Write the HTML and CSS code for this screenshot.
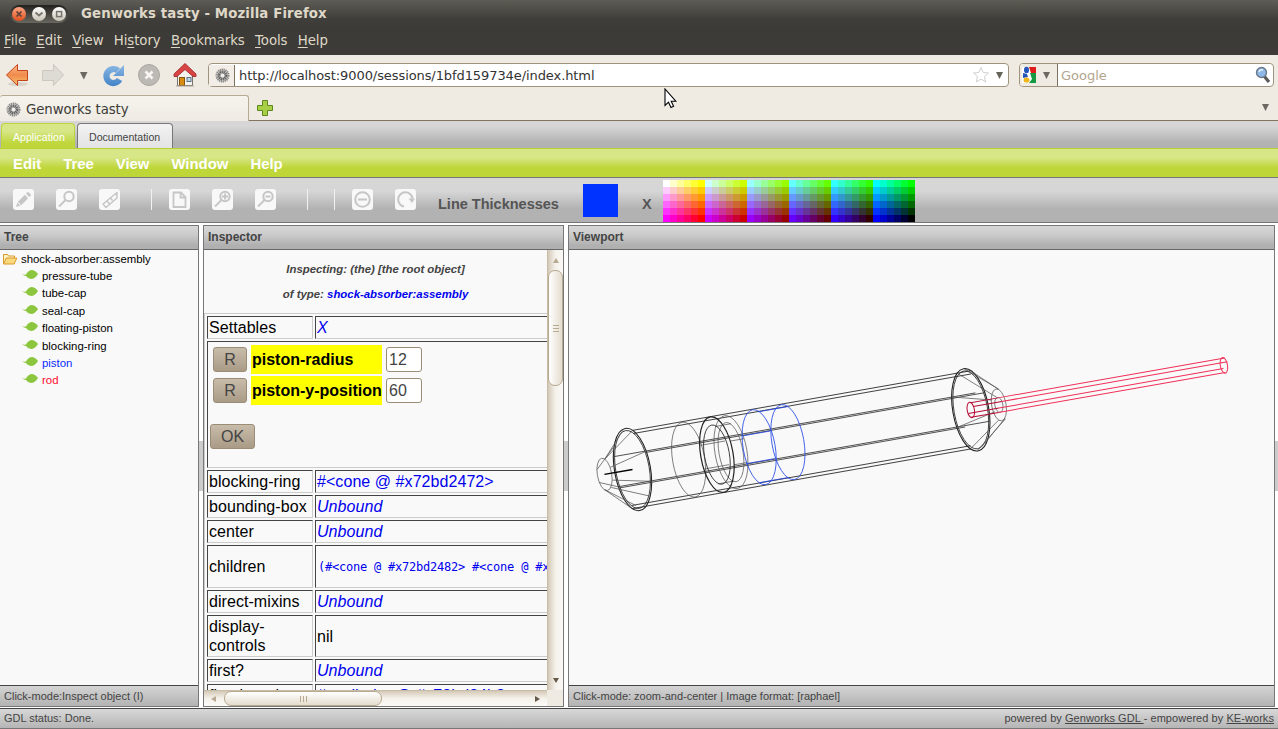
FILE: index.html
```
<!DOCTYPE html>
<html lang="en">
<head>
<meta charset="utf-8">
<title>Genworks tasty</title>
<link rel="stylesheet" href="styles.css">
</head>
<body>
<header class="chrome">
  <div class="titlebar">
    <div class="winbtns">
      <svg width="58" height="18" viewBox="0 0 58 18">
        <defs><linearGradient id="wg" x2="0" y2="1"><stop offset="0" stop-color="#fff"/><stop offset="1" stop-color="#c9c3b6"/></linearGradient>
        <linearGradient id="wo" x2="0" y2="1"><stop offset="0" stop-color="#f9a582"/><stop offset="1" stop-color="#e0501c"/></linearGradient></defs>
        <circle cx="9" cy="9" r="7" fill="url(#wo)"/><circle cx="29" cy="9" r="7" fill="url(#wg)"/><circle cx="49" cy="9" r="7" fill="url(#wg)"/>
        <path d="M6.500 6.500l5 5m0-5l-5 5" stroke="#5d4038" stroke-width="1.700"/>
        <path d="M25.500 7.500l3.500 3 3.500-3" fill="none" stroke="#77746b" stroke-width="1.800"/>
        <rect x="46.600" y="6.600" width="5" height="5" fill="none" stroke="#77746b" stroke-width="1.500"/>
      </svg>
    </div>
    <span class="wintitle">Genworks tasty - Mozilla Firefox</span>
  </div>
  <nav class="winmenu"><span><u>F</u>ile</span><span><u>E</u>dit</span><span><u>V</u>iew</span><span>Hi<u>s</u>tory</span><span><u>B</u>ookmarks</span><span><u>T</u>ools</span><span><u>H</u>elp</span></nav>
  <div class="navbar">
    <svg class="navicons" width="208" height="40" viewBox="0 55 208 40">
      <defs>
        <linearGradient id="or" x2="0" y2="1"><stop offset="0" stop-color="#fbb98a"/><stop offset=".5" stop-color="#f08a4b"/><stop offset="1" stop-color="#fac46f"/></linearGradient>
        <linearGradient id="bl" gradientUnits="userSpaceOnUse" x1="0" y1="66" x2="0" y2="86"><stop offset="0" stop-color="#85b4e2"/><stop offset="1" stop-color="#4584c8"/></linearGradient>
      </defs>
      <ellipse cx="18" cy="84" rx="10" ry="2" fill="#d9d3c9"/>
      <path d="M6.500 75L17.500 64.500V70.500H27.500V80.500H17.500V85.500Z" fill="url(#or)" stroke="#c4431c"/>
      <path d="M63.500 75L53.500 64.500V70.500H42.500V80.500H53.500V85.500Z" fill="#dedad4" stroke="#ccc7bf"/>
      <path d="M80 72h7.500l-3.700 7.500z" fill="#6b6861"/>
      <path d="M119.500 79.500A7 7 0 1 1 118 70.700" fill="none" stroke="url(#bl)" stroke-width="6.200"/>
      <path d="M124 65V76H113L116.500 72.500Z" fill="url(#bl)"/>
      <circle cx="149" cy="75" r="10.500" fill="#bdb9b4" stroke="#aaa69f"/>
      <path d="M145.500 71.500l7 7m0-7l-7 7" stroke="#f8f6f2" stroke-width="2.600"/>
      <path d="M177.500 75L185 68l7.500 7v10.500h-15z" fill="#f4f2ee" stroke="#77736b"/>
      <rect x="179.500" y="77.500" width="5" height="8" fill="#d88c12" stroke="#855410"/>
      <rect x="187" y="77.500" width="4" height="4" fill="#bcd7ec" stroke="#5c7284"/>
      <path d="M185 63.500l11 10.500v2.500h-3L185 69.500l-8 7h-3V74z" fill="#d94444" stroke="#9b2020" stroke-width=".8"/>
      <path d="M176 86h18" stroke="#a9a39a"/>
    </svg>
    <div class="urlbox">
      <span class="favbox"><svg class="favicon" width="15" height="15" viewBox="0 0 16 16"><circle cx="8" cy="8" r="6.300" fill="none" stroke="#8a8a8a" stroke-width="2.400" stroke-dasharray="1.400 .6"/><circle cx="8" cy="8" r="3.700" fill="none" stroke="#666" stroke-width="3" stroke-dasharray="1.600 .4"/><circle cx="8" cy="8" r="1.300" fill="#eee"/></svg></span>
      <span class="url">http://localhost:9000/sessions/1bfd159734e/index.html</span>
      <svg width="36" height="22" viewBox="0 0 36 22"><path d="M9 3.500l2.200 5 5.300.5-4 3.600 1.200 5.400L9 15.200 4.300 18l1.200-5.400-4-3.600 5.300-.5z" fill="#fff" stroke="#cfcfcf"/><path d="M24 8h7l-3.500 7z" fill="#66635a"/></svg>
    </div>
    <div class="searchbox">
      <span class="engine"><svg width="36" height="22" viewBox="0 0 36 22"><rect x="2" y="3" width="14" height="16" fill="#fff"/><path d="M9 3h7v6h-5z" fill="#e11b1b"/><path d="M10 9h6v10H9l3-4z" fill="#159a43"/><ellipse cx="6.500" cy="6" rx="2.500" ry="3.200" fill="#2456b8"/><path d="M3 9l4 1 1 3-5 1z" fill="#2456b8"/><ellipse cx="6.500" cy="16" rx="3" ry="2.600" fill="#f1b51c"/><path d="M23 8h7l-3.500 7z" fill="#6b6861"/></svg></span>
      <span class="placeholder">Google</span>
      <svg width="18" height="22" viewBox="0 0 18 22"><path d="M9 12l5 6" stroke="#5a5a5a" stroke-width="3.200"/><circle cx="6.500" cy="8.500" r="5" fill="#8db8e8" stroke="#6c7a8c" stroke-width="1.400"/><path d="M4 8q1-3 4-2" stroke="#e6f0fa" stroke-width="1.500" fill="none"/></svg>
    </div>
  </div>
  <div class="tabstrip">
    <div class="tab"><svg class="favicon" width="15" height="15" viewBox="0 0 16 16"><circle cx="8" cy="8" r="6.300" fill="none" stroke="#8a8a8a" stroke-width="2.400" stroke-dasharray="1.400 .6"/><circle cx="8" cy="8" r="3.700" fill="none" stroke="#666" stroke-width="3" stroke-dasharray="1.600 .4"/><circle cx="8" cy="8" r="1.300" fill="#eee"/></svg><span>Genworks tasty</span></div>
    <div class="tabrest">
      <svg width="18" height="18" viewBox="0 0 18 18"><path d="M6.500 1.500h5v5h5v5h-5v5h-5v-5h-5v-5h5z" fill="#a9cf46" stroke="#5d8a1e"/></svg>
      <svg width="9" height="9" viewBox="0 0 9 9"><path d="M1 1h7L4.500 8z" fill="#6b6861"/></svg>
    </div>
  </div>
</header>
<svg class="pointer" width="14" height="22" viewBox="0 0 14 22"><path d="M1 1v16.500l3.500-3.300 2.500 5.300 2.600-1.200-2.400-5.100h4.600z" fill="#fff" stroke="#000" stroke-width="1.100"/></svg>

<div class="apptabs"><span class="apptab active">Application</span><span class="apptab">Documentation</span></div>
<nav class="appmenu"><span>Edit</span><span>Tree</span><span>View</span><span>Window</span><span>Help</span></nav>
<div class="apptools">
  <svg class="toolset" width="420" height="44" viewBox="0 178 420 44">
    <g fill="#f8f8f8"><rect x="13" y="189" width="21" height="21" rx="3"/><rect x="56" y="189" width="21" height="21" rx="3"/><rect x="99" y="189" width="21" height="21" rx="3"/><rect x="169" y="189" width="21" height="21" rx="3"/><rect x="212" y="189" width="21" height="21" rx="3"/><rect x="255" y="189" width="21" height="21" rx="3"/><rect x="352" y="189" width="21" height="21" rx="3"/><rect x="395" y="189" width="21" height="21" rx="3"/></g>
    <g stroke="#f2f2f2"><path d="M151.500 189v21M307.500 189v21M334.500 189v21"/></g>
    <path d="M16 207l1.300-4.500 3.200 3.200z" fill="#c6c6c6"/><path d="M19.500 203.500l7-7" stroke="#c6c6c6" stroke-width="4.600"/><path d="M27.600 195.400l2-2" stroke="#c6c6c6" stroke-width="4.600"/>
    <g fill="none" stroke="#c6c6c6" stroke-width="2">
      <circle cx="69" cy="196.500" r="4.700"/><path d="M65.500 200l-6.500 6.500"/>
      <path d="M117 192.500v5.500l-11 9.500-3-3.500zM107 201l2.500 3M110.500 198l2 2.500" stroke-width="1.500" stroke-linejoin="round"/>
      <path d="M173.500 192.500h7.500l4.500 4.500v10h-12zM180.500 192.500v5h5" stroke-width="1.800"/>
      <circle cx="225" cy="196.500" r="4.700"/><path d="M221.500 200l-6.500 6.500M222 196.500h6M225 193.500v6" stroke-width="1.900"/>
      <circle cx="268" cy="196.500" r="4.700"/><path d="M264.500 200l-6.500 6.500M265.500 196.500h5"/>
      <circle cx="362.500" cy="199.500" r="7.300"/><path d="M358 199.500h9"/>
      <path d="M404 206.500a7.200 7.200 0 1 1 8.500-8"/><path d="M408.500 198.500h6.500l-3 4.500z" fill="#c6c6c6" stroke="none"/>
    </g>
  </svg>
  <span class="toollabel lines">Line Thicknesses</span>
  <span class="swatch"></span>
  <span class="toollabel cross">X</span>
  <div class="palette" id="palette"></div>
</div>

<main class="panels">
  <section class="panel treepanel">
    <h2>Tree</h2>
    <ul class="tree">
      <li class="root"><svg width="16" height="14" viewBox="0 0 16 14"><path d="M1.500 11.500v-9h4l1 1.500h6v2" fill="#fff3c4" stroke="#d9992d"/><path d="M1.500 12l2.800-6h10.500l-2.600 6z" fill="#fbd97c" stroke="#d9992d"/></svg><span>shock-absorber:assembly</span></li>
      <li><svg class="leaf" width="17" height="10" viewBox="0 0 17 10"><path d="M0 4q2 1 4 .5 2-4 5.500-4.500 3.500 0 6.500 4-3 5-7 5-3 0-5-3Q2 6 0 4z" fill="#8cc63f"/></svg>pressure-tube</li>
      <li><svg class="leaf" width="17" height="10" viewBox="0 0 17 10"><path d="M0 4q2 1 4 .5 2-4 5.500-4.500 3.500 0 6.500 4-3 5-7 5-3 0-5-3Q2 6 0 4z" fill="#8cc63f"/></svg>tube-cap</li>
      <li><svg class="leaf" width="17" height="10" viewBox="0 0 17 10"><path d="M0 4q2 1 4 .5 2-4 5.500-4.500 3.500 0 6.500 4-3 5-7 5-3 0-5-3Q2 6 0 4z" fill="#8cc63f"/></svg>seal-cap</li>
      <li><svg class="leaf" width="17" height="10" viewBox="0 0 17 10"><path d="M0 4q2 1 4 .5 2-4 5.500-4.500 3.500 0 6.500 4-3 5-7 5-3 0-5-3Q2 6 0 4z" fill="#8cc63f"/></svg>floating-piston</li>
      <li><svg class="leaf" width="17" height="10" viewBox="0 0 17 10"><path d="M0 4q2 1 4 .5 2-4 5.500-4.500 3.500 0 6.500 4-3 5-7 5-3 0-5-3Q2 6 0 4z" fill="#8cc63f"/></svg>blocking-ring</li>
      <li class="blue"><svg class="leaf" width="17" height="10" viewBox="0 0 17 10"><path d="M0 4q2 1 4 .5 2-4 5.500-4.500 3.500 0 6.500 4-3 5-7 5-3 0-5-3Q2 6 0 4z" fill="#8cc63f"/></svg>piston</li>
      <li class="red"><svg class="leaf" width="17" height="10" viewBox="0 0 17 10"><path d="M0 4q2 1 4 .5 2-4 5.500-4.500 3.500 0 6.500 4-3 5-7 5-3 0-5-3Q2 6 0 4z" fill="#8cc63f"/></svg>rod</li>
    </ul>
    <footer>Click-mode:Inspect object (I)</footer>
  </section>
  <div class="splitter"><i></i></div>
  <section class="panel inspector">
    <h2>Inspector</h2>
    <div class="scrollarea">
      <div class="inspectbody">
        <div class="about"><p>Inspecting: (the) [the root object]</p><p>of type: <b>shock-absorber:assembly</b></p></div>
        <div class="props">
          <div class="cell">Settables</div><div class="cell"><em>X</em></div>
          <div class="cell form">
            <div class="field"><button>R</button><strong>piston-radius</strong><span class="input">12</span></div>
            <div class="field"><button>R</button><strong>piston-y-position</strong><span class="input">60</span></div>
            <button class="ok">OK</button>
          </div>
          <div class="cell">blocking-ring</div><div class="cell link">#&lt;cone @ #x72bd2472&gt;</div>
          <div class="cell">bounding-box</div><div class="cell"><em>Unbound</em></div>
          <div class="cell">center</div><div class="cell"><em>Unbound</em></div>
          <div class="cell">children</div><div class="cell mono">(#&lt;cone @ #x72bd2482&gt; #&lt;cone @ #x72bd2472&gt;</div>
          <div class="cell">direct-mixins</div><div class="cell"><em>Unbound</em></div>
          <div class="cell">display-<br>controls</div><div class="cell">nil</div>
          <div class="cell">first?</div><div class="cell"><em>Unbound</em></div>
          <div class="cell">floating-piston</div><div class="cell link">#&lt;cylinder @ #x72bd24b2&gt;</div>
        </div>
      </div>
      <div class="vscroll"><svg width="16" height="20" viewBox="0 0 16 20"><path d="M5 13h6l-3-5z" fill="#b8ab93"/></svg><div class="vthumb"><i></i><i></i><i></i></div><svg width="16" height="20" viewBox="0 0 16 20"><path d="M5 8h6l-3 5z" fill="#65594a"/></svg></div>
      <div class="hscroll"><svg width="20" height="16" viewBox="0 0 20 16"><path d="M12 5v6l-5-3z" fill="#b8ab93"/></svg><div class="hthumb"><i></i><i></i><i></i></div><svg class="hend" width="20" height="16" viewBox="0 0 20 16"><path d="M8 5v6l5-3z" fill="#65594a"/></svg></div>
      <div class="corner"></div>
    </div>
  </section>
  <div class="splitter"><i></i></div>
  <section class="panel viewport">
    <h2>Viewport</h2>
    <svg class="drawing" width="705" height="435" viewBox="569 250 705 435" fill="none">
      <!-- tube, caps and pistons share one tilted axis -->
      <g transform="translate(632.500 469.500) rotate(-10)" stroke="#222" stroke-width=".8">
        <ellipse rx="18" ry="41.700" stroke-width="1.100"/><ellipse rx="16.800" ry="39.500"/>
        <ellipse cx="343.500" rx="18" ry="41.700" stroke-width="1.100"/><ellipse cx="343.500" rx="16.800" ry="39.500"/>
        <path d="M7 -38.500H350M7 -35.300H350M-7 38.500H337M-7 35.300H337"/>
        <path d="M16 -15.900H351M16 -14.500H360M-16 15.900H335M-16 14.500H360M-16 -15.900H16" stroke="#333"/>
        <g stroke="#555" stroke-width=".7">
          <ellipse cx="-28.400" rx="7.200" ry="16.400"/>
          <path d="M-25.500 -15L7 -38.500M-25.500 -15L-2 -41M-35 -6L-14 -26M-21.500 -6L16 -15.500M-31 15L-7 38.500M-31 15L-3 36M-21.500 7L17 15M-35 7L-16 15M-24 14L12 29"/>
          <ellipse cx="372" rx="7.200" ry="16.200"/><ellipse cx="372" rx="4" ry="7.600"/>
          <path d="M350 -38.500L375 -15M345 -41L374 -16M337 -38L371 -8M327 -16L366 -6M327 15L367 6M337 38L369 15M352 35L376 14M343 41L376 15"/>
          <ellipse cx="57" rx="16" ry="38"/>
          <ellipse cx="100" rx="16" ry="37"/><ellipse cx="100" rx="12" ry="30"/>
          <path d="M71 -12H96M71 12H96M89 -28H105M82 29H98M101 -11H115M101 13H114"/>
        </g>
        <ellipse cx="85.700" rx="16.200" ry="38.300" stroke-width="1.200"/><ellipse cx="85.700" rx="12.500" ry="30"/>
        <g stroke="#2448e8" stroke-width=".8"><ellipse cx="128.600" rx="16" ry="38"/><ellipse cx="157.800" rx="16" ry="38"/><path d="M134 -35H164M114 -14H142M113 14H142M123 35H152"/></g>
        <path d="M-28.500 0H0" stroke="#000" stroke-width="1.300"/>
      </g>
      <g transform="translate(970.800 410) rotate(-10)" stroke="#f03058" stroke-width="1">
        <path d="M29 -7.200H259M32 -3H261M28 3H256M27 7.200H257"/><ellipse cx="257" rx="3.600" ry="7.900"/>
        <g stroke="#b50a35"><ellipse rx="3.600" ry="7.800"/><path d="M1 -7.200H29M3 -3H32M-3 3H28M-1 7.200H27"/></g>
      </g>
    </svg>
    <footer>Click-mode: zoom-and-center | Image format: [raphael]</footer>
  </section>
  <div class="splitter last"><i></i></div>
</main>
<div class="status"><span>GDL status: Done.</span><span class="credits">powered by <u>Genworks GDL </u>- empowered by <u>KE-works</u></span></div>
<script src="palette.js"></script>
</body>
</html>
```
FILE: styles.css
```
* { box-sizing: border-box; }
body { margin: 0; width: 1278px; height: 729px; overflow: hidden; background: #fff; font-family: "Liberation Sans", sans-serif; color: #444; display: flex; flex-direction: column; }
svg { display: block; flex: none; }
.chrome { font: 13.300px "DejaVu Sans", sans-serif; flex: none; height: 121px; background: #efebe3; }
.titlebar { height: 27px; display: flex; align-items: center; gap: 13px; padding-left: 10px; background: linear-gradient(#5d5c55, #3f3e3a 70%, #3c3b37); }
.winbtns { background: linear-gradient(#22211e, #68675f); border-radius: 9px; }
.wintitle { font-weight: bold; color: #dfd8c8; font-size: 13.300px; letter-spacing: .12px; }
.winmenu { height: 28px; display: flex; gap: 10.300px; align-items: center; padding: 0 0 2px 4px; background: #3c3b37; color: #dfd8c8; letter-spacing: -.06px; }
.winmenu u { text-underline-offset: 2px; }
.navbar { height: 40px; display: flex; align-items: center; padding-right: 4px; }
.urlbox { width: 801px; height: 24px; border: 1.500px solid #a0937d; border-radius: 4px; background: #fff; display: flex; align-items: center; }
.favbox { width: 26px; height: 21px; padding: 3px 0 0 6px; background: #f2eee7; border-right: 1px solid #7d7260; }
.url { flex: 1; padding-left: 4px; color: #333; font-size: 13px; letter-spacing: -.085px; }
.searchbox { width: 255px; margin-left: 10px; height: 24px; border: 1.500px solid #a0937d; border-radius: 4px; background: #fff; display: flex; align-items: center; }
.engine { width: 38px; background: #efebe3; border-right: 1px solid #7d7260; border-radius: 3px 0 0 3px; }
.placeholder { flex: 1; padding-left: 3px; color: #b3a58e; font-size: 13px; }
.tabstrip { height: 26px; display: flex; }
.tab { width: 249px; display: flex; align-items: center; gap: 5px; padding: 2px 0 0 6px; color: #3c3b37; letter-spacing: -.08px; background: linear-gradient(#f6f3ee, #efebe3); border: 1px solid #b8ab92; border-width: 1px 1px 0 0; border-radius: 3px 3px 0 0; }
.tabrest { flex: 1; display: flex; justify-content: space-between; align-items: center; padding: 0 8px 0 7px; border-bottom: 1px solid #85745f; }
.pointer { position: absolute; left: 664px; top: 88px; }

.apptabs { flex: none; height: 27px; padding: 2px 0 0 1px; display: flex; gap: 2px; background: linear-gradient(#d6d6d6 20%, #b2b2b2 80%); }
.apptab { width: 96px; font-size: 10.600px; height: 25px; padding: 7px 0 0 11px; border: 1px solid #777; border-bottom: 0; border-radius: 4px 4px 0 0; background: linear-gradient(#f3f3f3, #e3e3e3); white-space: nowrap; }
.apptab.active { width: 74px; color: #fff; border-color: #bdd63a; background: linear-gradient(#d7e687 30%, #bfd73c 80%); }
.appmenu { flex: none; height: 30px; display: flex; gap: 22px; align-items: center; padding: 2px 0 0 13px; font: bold 14.900px "Liberation Sans", sans-serif; color: #fff; border-top: 1px solid #bad133; border-bottom: 1px solid #777; background: linear-gradient(#d7e687 30%, #bed638 68%); }
.apptools { flex: none; height: 45px; display: flex; border-bottom: 1px solid #777; background: linear-gradient(#d6d6d6 30%, #b2b2b2 70%); }
.toollabel { font: bold 14.500px "Liberation Sans", sans-serif; color: #555; padding-top: 18px; }
.lines { width: 145px; margin-left: 18px; }
.swatch { width: 35px; height: 33px; margin-top: 6px; background: #0033ff; }
.cross { width: 21px; margin-left: 24px; }
.palette { margin-top: 2px; height: 42px; display: grid; grid-template: repeat(6, 7px) / repeat(36, 7px); }

.panels { flex: none; height: 484px; padding-top: 2px; display: flex; }
.panel { flex: none; height: 482px; display: flex; flex-direction: column; border: 1px solid #777; background: #f9f9f9; }
.treepanel { width: 199px; border-left: 0; }
.inspector { width: 361px; }
.viewport { width: 707px; }
.panel h2 { flex: none; margin: 0; height: 24px; padding: 4px 0 0 4px; font-size: 12px; line-height: 15px; border-bottom: 1.500px solid #666; background: linear-gradient(#d8d8d8, #cacaca 40%, #b0b0b0 85%); }
.panel footer { flex: none; margin-top: auto; height: 21px; padding: 3px 4px; font-size: 11px; line-height: 14px; border-top: 1px solid #444; background: linear-gradient(#d4d4d4, #b3b3b3); }
.splitter { flex: none; width: 4px; padding-top: 216px; }
.splitter.last { width: 3px; }
.splitter i { display: block; height: 50px; background: #ccc; }
.tree { list-style: none; margin: 0; padding: 0; font-size: 11.400px; color: #000; }
.tree li { height: 17.400px; display: flex; align-items: center; padding-left: 22px; gap: 3px; }
.tree .root { padding-left: 2px; }
.tree .blue { color: #0a2bff; }
.tree .red { color: #ff0a30; }
.leaf { margin-top: -2px; }

.scrollarea { flex: 1; min-height: 0; display: grid; grid-template: 440px 16px / 343px 16px; }
.inspectbody { overflow: hidden; width: 343px; }
.about { height: 63px; padding-top: 9px; text-align: center; font: italic bold 11.400px "Liberation Sans", sans-serif; }
.about p { margin: 0; line-height: 20px; height: 25px; }
.about b { color: #00e; }
.props { width: 500px; display: grid; grid-template-columns: 106px 1fr; grid-template-rows: 23px 127px 23px 23px 23px 43px 23px 42px 23px 23px; gap: 2px; padding: 2px 0 0 2px; border: 1px solid #ccc; border-width: 1px 0 0 1px; color: #000; font-size: 16px; line-height: 19px; letter-spacing: .06px; }
.cell { border: 1px solid; border-color: #444 #ccc #ccc #444; padding: 1px; display: flex; align-items: center; white-space: nowrap; }
.props em, .link { color: #00e; }
.mono { color: #00e; font: 12px "DejaVu Sans Mono", monospace; letter-spacing: -.22px; padding-left: 2px; }
.form { grid-column: 1 / 3; display: flex; flex-direction: column; align-items: flex-start; padding-top: 2px; }
.field { display: flex; align-items: center; gap: 4px; height: 31px; padding-left: 4px; }
.field strong { width: 131px; height: 29px; padding: 5px 1px; background: #ff0; letter-spacing: 0; }
.form button { width: 34px; height: 25px; padding: 0; font: 16px "Liberation Sans", sans-serif; color: #444; border: 1px solid #9b8c76; border-radius: 3px; background: linear-gradient(#c8bcaa, #a99b86); }
.form .ok { width: 45px; margin: 18px 0 0 1px; }
.input { width: 36px; height: 25px; border: 1px solid #9b8c76; border-radius: 3px; background: #fff; color: #444; padding: 2px; }
.vscroll { background: linear-gradient(90deg, #d4c9b7, #f5f2ec 50%, #fbf9f6); border-left: 1px solid #c8bca7; display: flex; flex-direction: column; }
.vthumb { height: 116px; display: flex; flex-direction: column; justify-content: center; gap: 2px; align-items: center; border: 1px solid #b8aa91; border-radius: 7px; background: linear-gradient(90deg, #fff, #e4dccd); }
.vthumb i { width: 6px; height: 1px; background: #b8aa91; }
.vscroll svg:last-child { margin-top: auto; }
.hscroll { background: linear-gradient(#d4c9b7, #f5f2ec 50%, #fbf9f6); border-top: 1px solid #c8bca7; border-radius: 0 0 8px 8px; display: flex; }
.hthumb { width: 158px; height: 15px; display: flex; justify-content: center; gap: 2px; align-items: center; border: 1px solid #b8aa91; border-radius: 7px; background: linear-gradient(#fff, #e4dccd); }
.hthumb i { width: 1px; height: 6px; background: #b8aa91; }
.hend { margin-left: auto; }
.corner { background: #efebe3; }
.status { flex: none; margin-top: 1px; height: 21px; display: flex; justify-content: space-between; padding: 3px 4px; font-size: 11px; line-height: 13px; border-top: 1px solid #444; border-bottom: 1px solid #777; background: linear-gradient(#d8d8d8, #b5b5b5); }
.credits { letter-spacing: .06px; }
```
FILE: palette.js
```
const steps = ['ff', 'cc', '99', '66', '33', '00'];
const palette = document.getElementById('palette');
for (const green of steps) {
  for (const red of steps) {
    for (const blue of steps) {
      const chip = document.createElement('i');
      chip.style.background = '#' + red + green + blue;
      palette.append(chip);
    }
  }
}
```
